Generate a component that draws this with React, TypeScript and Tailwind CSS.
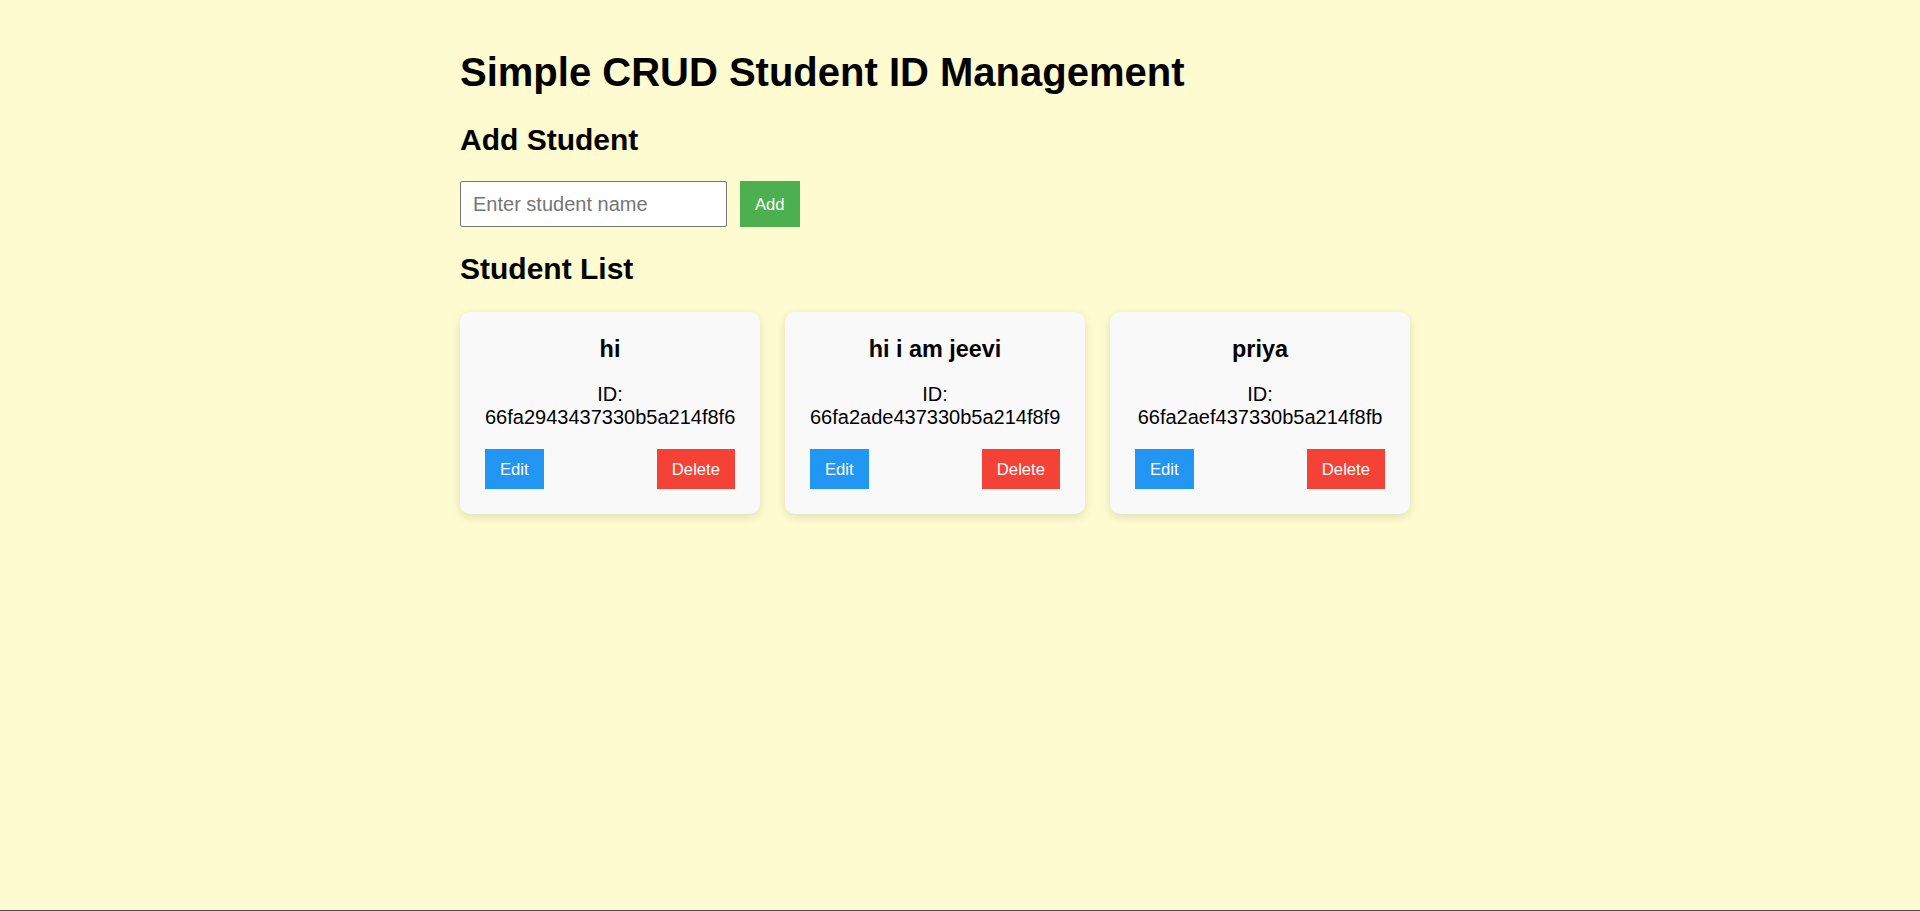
import React, { useState } from 'react'

type Student = {
  id: string
  name: string
}

const initialStudents: Student[] = [
  { id: '66fa2943437330b5a214f8f6', name: 'hi' },
  { id: '66fa2ade437330b5a214f8f9', name: 'hi i am jeevi' },
  { id: '66fa2aef437330b5a214f8fb', name: 'priya' },
]

const StudentCard = ({
  student,
  onDelete,
}: {
  student: Student
  onDelete: (id: string) => void
}) => {
  return (
    <div className="w-[300px] rounded-[10px] bg-[#f9f9f9] px-[25px] pt-[24px] pb-[25px] text-center shadow-[0_3px_10px_rgba(0,0,0,0.12)]">
      <h3 className="text-[23.4px] leading-[27px] font-bold">{student.name}</h3>
      <p className="mt-[20px] text-[20px] leading-[23px]">
        ID: {student.id}
      </p>
      <div className="mt-[20px] flex justify-between">
        <button className="h-[40px] bg-[#2196f3] px-[15px] text-[16.67px] text-white">
          Edit
        </button>
        <button
          className="h-[40px] bg-[#f44336] px-[15px] text-[16.67px] text-white"
          onClick={() => onDelete(student.id)}
        >
          Delete
        </button>
      </div>
    </div>
  )
}

const App = () => {
  const [students, setStudents] = useState<Student[]>(initialStudents)
  const [name, setName] = useState('')

  const handleAdd = () => {
    if (!name.trim()) return
    setStudents([
      ...students,
      { id: Math.random().toString(16).slice(2, 26), name },
    ])
    setName('')
  }

  return (
    <div className="flex h-screen flex-col bg-[#fffbd0] font-['Liberation_Sans',Arial,sans-serif] text-black">
      <main className="mx-auto w-[1000px] flex-1 pt-[49px]">
        <h1 className="text-[40px] leading-[46px] font-bold">
          Simple CRUD Student ID Management
        </h1>

        {/* Add form */}
        <h2 className="mt-[28px] text-[30px] leading-[34px] font-bold">
          Add Student
        </h2>
        <div className="mt-[24px] flex gap-[13px]">
          <input
            className="h-[46px] w-[267px] rounded-[2px] border border-[#767676] bg-white px-[12px] text-[20px] placeholder:text-[#757575]"
            type="text"
            placeholder="Enter student name"
            value={name}
            onChange={(event) => setName(event.target.value)}
          />
          <button
            className="h-[46px] bg-[#4caf50] px-[15px] text-[16.67px] text-white"
            onClick={handleAdd}
          >
            Add
          </button>
        </div>

        {/* List */}
        <h2 className="mt-[25px] text-[30px] leading-[34px] font-bold">
          Student List
        </h2>
        <div className="mt-[26px] flex gap-[25px]">
          {students.map((student) => (
            <StudentCard
              key={student.id}
              student={student}
              onDelete={(id) =>
                setStudents(students.filter((s) => s.id !== id))
              }
            />
          ))}
        </div>
      </main>
      <div className="h-px bg-[#4a4a4a]"></div>
    </div>
  )
}

export default App
